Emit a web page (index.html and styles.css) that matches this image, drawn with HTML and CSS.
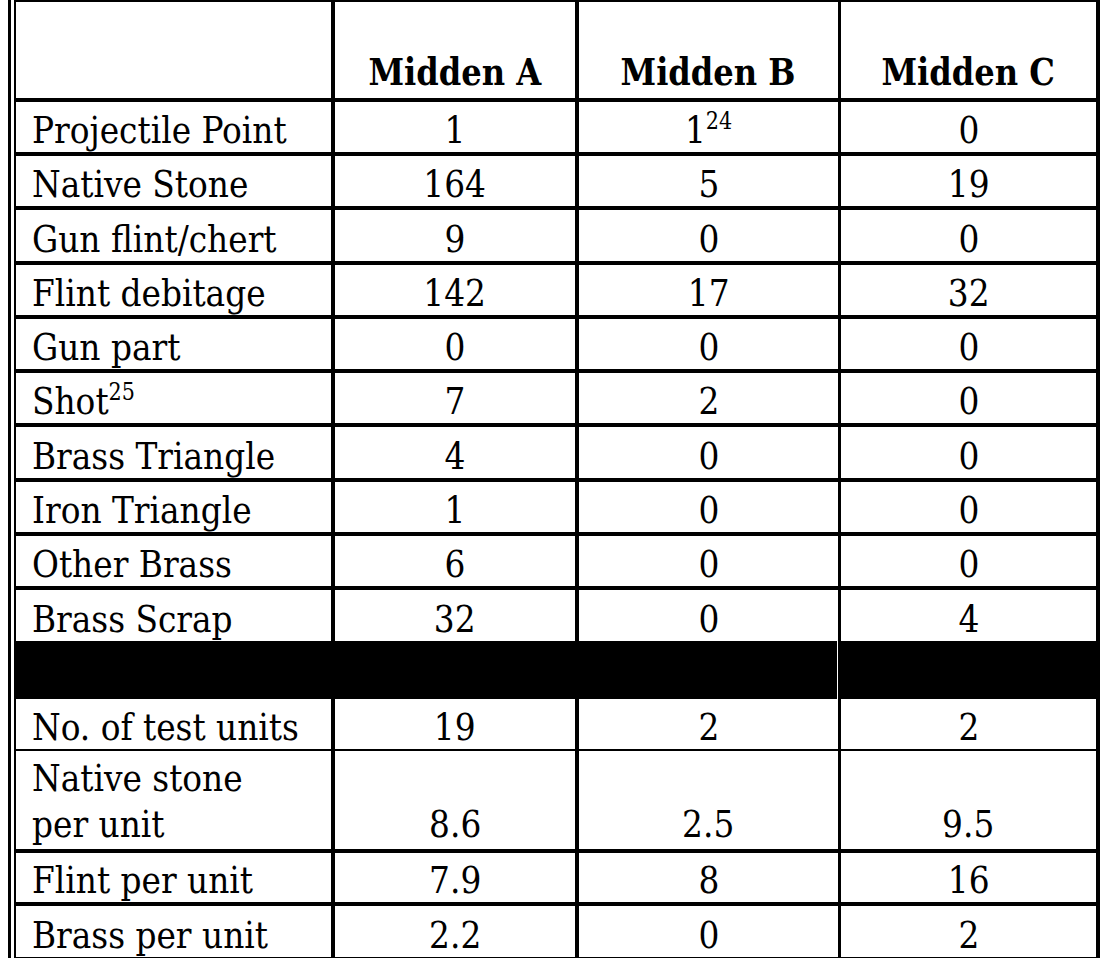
FILE: index.html
```html
<!DOCTYPE html>
<html>
<head>
<meta charset="utf-8">
<link rel="stylesheet" href="styles.css">
</head>
<body>
<div class="frame">
<table class="tbl">
  <tr class="head">
    <td class="c0"></td>
    <td class="ca"><span class="t">Midden A</span></td>
    <td class="cb"><span class="t">Midden B</span></td>
    <td class="cc"><span class="t">Midden C</span></td>
  </tr>
  <tr class="r54"><td class="c0"><span class="t">Projectile Point</span></td><td class="ca"><span class="t">1</span></td><td class="cb"><span class="t">1<sup>24</sup></span></td><td class="cc"><span class="t">0</span></td></tr>
  <tr class="r54"><td class="c0"><span class="t">Native Stone</span></td><td class="ca"><span class="t">164</span></td><td class="cb"><span class="t">5</span></td><td class="cc"><span class="t">19</span></td></tr>
  <tr class="r55"><td class="c0"><span class="t">Gun flint/chert</span></td><td class="ca"><span class="t">9</span></td><td class="cb"><span class="t">0</span></td><td class="cc"><span class="t">0</span></td></tr>
  <tr class="r54"><td class="c0"><span class="t">Flint debitage</span></td><td class="ca"><span class="t">142</span></td><td class="cb"><span class="t">17</span></td><td class="cc"><span class="t">32</span></td></tr>
  <tr class="r54"><td class="c0"><span class="t">Gun part</span></td><td class="ca"><span class="t">0</span></td><td class="cb"><span class="t">0</span></td><td class="cc"><span class="t">0</span></td></tr>
  <tr class="r54"><td class="c0"><span class="t">Shot<sup>25</sup></span></td><td class="ca"><span class="t">7</span></td><td class="cb"><span class="t">2</span></td><td class="cc"><span class="t">0</span></td></tr>
  <tr class="r55"><td class="c0"><span class="t">Brass Triangle</span></td><td class="ca"><span class="t">4</span></td><td class="cb"><span class="t">0</span></td><td class="cc"><span class="t">0</span></td></tr>
  <tr class="r54"><td class="c0"><span class="t">Iron Triangle</span></td><td class="ca"><span class="t">1</span></td><td class="cb"><span class="t">0</span></td><td class="cc"><span class="t">0</span></td></tr>
  <tr class="r54"><td class="c0"><span class="t">Other Brass</span></td><td class="ca"><span class="t">6</span></td><td class="cb"><span class="t">0</span></td><td class="cc"><span class="t">0</span></td></tr>
  <tr class="r51 nob"><td class="c0"><span class="t">Brass Scrap</span></td><td class="ca"><span class="t">32</span></td><td class="cb"><span class="t">0</span></td><td class="cc"><span class="t">4</span></td></tr>
  <tr class="black"><td class="c0"></td><td class="ca"></td><td class="cb"></td><td class="cc"></td></tr>
  <tr class="r52 thin"><td class="c0"><span class="t">No. of test units</span></td><td class="ca"><span class="t">19</span></td><td class="cb"><span class="t">2</span></td><td class="cc"><span class="t">2</span></td></tr>
  <tr class="r102"><td class="c0"><span class="t">Native stone<br>per unit</span></td><td class="ca"><span class="t">8.6</span></td><td class="cb"><span class="t">2.5</span></td><td class="cc"><span class="t">9.5</span></td></tr>
  <tr class="r53"><td class="c0"><span class="t">Flint per unit</span></td><td class="ca"><span class="t">7.9</span></td><td class="cb"><span class="t">8</span></td><td class="cc"><span class="t">16</span></td></tr>
  <tr class="r53b last"><td class="c0"><span class="t">Brass per unit</span></td><td class="ca"><span class="t">2.2</span></td><td class="cb"><span class="t">0</span></td><td class="cc"><span class="t">2</span></td></tr>
</table>
</div>
</body>
</html>
```
FILE: styles.css
```css
html, body {
  margin: 0;
  padding: 0;
  background: #fff;
}
body {
  padding-left: 8px;
  font-family: "DejaVu Serif", serif;
  font-stretch: condensed;
  color: #000;
}
.frame {
  border-left: 3px solid #000;
  padding-left: 3px;
}
.tbl {
  border-collapse: separate;
  border-spacing: 0;
  table-layout: fixed;
  width: 1086px;
  border-top: 2px solid #000;
  border-left: 2px solid #000;
  font-size: 38px;
  line-height: 40px;
}
.tbl td {
  padding: 0 0 2px 0;
  vertical-align: bottom;
  text-align: center;
  border-bottom: 4px solid #000;
  border-right: 4px solid #000;
  white-space: nowrap;
  overflow: visible;
}
.tbl td.c0 {
  width: 299px;
  padding-left: 16px;
  text-align: left;
}
.tbl td.ca { width: 240px; }
.tbl td.cb { width: 259px; border-right-width: 3px; }
.tbl td.cc { width: 255px; }
.head td {
  height: 90px;
  font-weight: bold;
  padding-bottom: 6px;
}
.r54 td { height: 48px; }
.r55 td { height: 49px; }
.r51 td { height: 49px; }
.r52 td { height: 48px; }
.r102 td {
  height: 96px;
  line-height: 46px;
  padding-bottom: 2px;
}
.r53 td { height: 47px; }
.r53b td { height: 49px; }
.nob td { border-bottom: 0; }
.thin td { border-bottom-width: 2px; }
.last td { border-bottom-width: 1px; }
.black td {
  background: #000;
  height: 58px;
  padding: 0;
  border-bottom: 0;
}
.black td.cb { box-shadow: inset -1px 0 #fff; }
.t {
  display: inline-block;
  transform: scaleX(0.96);
}
.c0 .t { transform-origin: left center; }
.head .t { transform: scaleX(0.94); }
sup {
  font-size: 24px;
  line-height: 0;
  vertical-align: 14px;
}
```
